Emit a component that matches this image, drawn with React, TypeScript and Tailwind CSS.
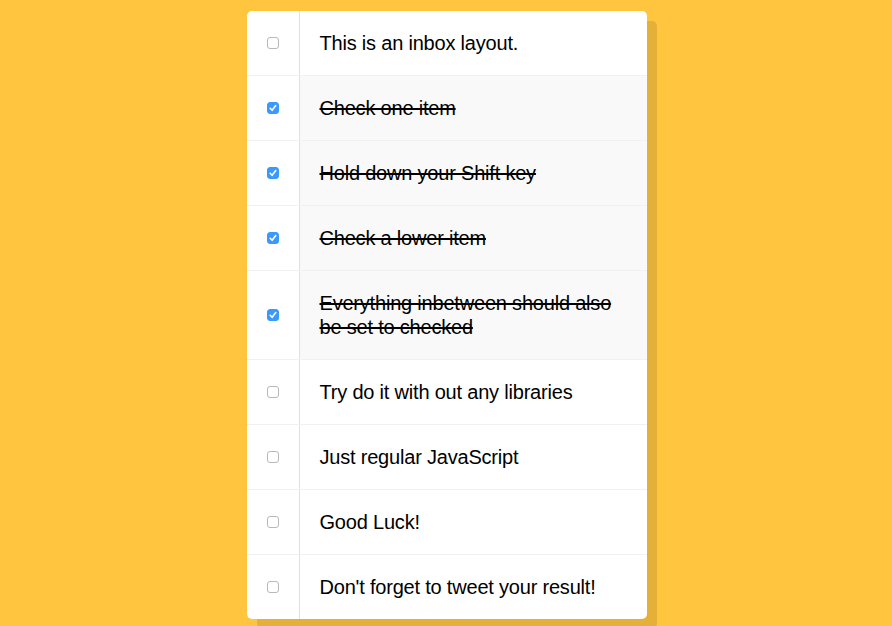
import React, { useState } from "react";

const items = [
  { text: "This is an inbox layout.", checked: false },
  { text: "Check one item", checked: true },
  { text: "Hold down your Shift key", checked: true },
  { text: "Check a lower item", checked: true },
  { text: "Everything inbetween should also be set to checked", checked: true },
  { text: "Try do it with out any libraries", checked: false },
  { text: "Just regular JavaScript", checked: false },
  { text: "Good Luck!", checked: false },
  { text: "Don't forget to tweet your result!", checked: false },
];

export default function App() {
  const [state, setState] = useState(items.map((i) => i.checked));
  return (
    <div className="min-h-screen w-full bg-[#ffc53e] pt-[11px] pb-[50px] pl-[1px]">
      <div className="mx-auto w-[400px] rounded-[5px] bg-white shadow-[10px_10px_0_rgba(0,0,0,0.1)]">
        {items.map((item, i) => (
          <div
            key={i}
            className={`flex items-stretch ${i < items.length - 1 ? "border-b border-[#f1f1f1]" : ""}`}
          >
            <div className="flex w-[52px] shrink-0 items-center justify-center">
              <span className="relative flex h-[12px] w-[12px]">
                <input
                  type="checkbox"
                  checked={state[i]}
                  onChange={() => setState((s) => s.map((v, j) => (j === i ? !v : v)))}
                  className={`m-0 h-[12px] w-[12px] appearance-none rounded-[3px] border ${
                    state[i] ? "border-[#3b99fc] bg-[#3b99fc]" : "border-[#b8b8b8] bg-white"
                  }`}
                />
                {state[i] && (
                  <svg
                    className="pointer-events-none absolute left-0 top-0"
                    width="12"
                    height="12"
                    viewBox="0 0 12 12"
                  >
                    <path d="M3.2 6.3 L5.1 8.3 L8.8 3.6" fill="none" stroke="white" strokeWidth="1.6" strokeLinecap="round" strokeLinejoin="round" />
                  </svg>
                )}
              </span>
            </div>
            <p
              className={`m-0 flex-1 border-l border-[#d1e2ff] p-5 text-[20px] leading-[24px] tracking-[-0.2px] text-black font-['Liberation_Sans',Arial,sans-serif] ${
                state[i] ? "bg-[#f9f9f9] line-through" : ""
              }`}
            >
              {item.text}
            </p>
          </div>
        ))}
      </div>
    </div>
  );
}
